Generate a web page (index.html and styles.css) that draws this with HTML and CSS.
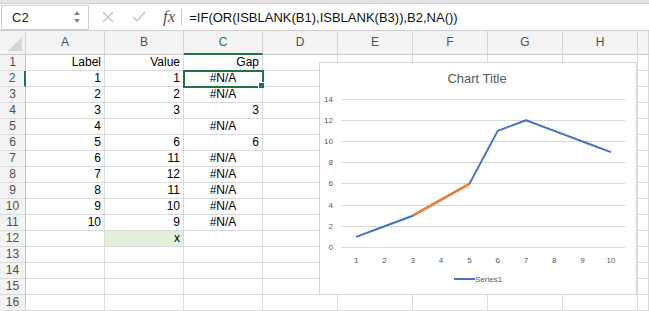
FILE: index.html
```html
<!DOCTYPE html>
<html lang="en">
<head>
    <meta charset="UTF-8">
    <meta name="viewport" content="width=device-width, initial-scale=1.0">
    <title>Gap</title>
    <link rel="stylesheet" href="styles.css">
</head>
<body>
    <div class="toolbar"></div>
    <div class="formula-bar">
        <div class="name-box">
            <span>C2</span>
            <svg class="spin" width="8" height="16" viewBox="0 0 8 16">
                <path d="M1 6 L4 2 L7 6 Z" fill="#8a8a8a"/>
                <path d="M1 10 L4 14 L7 10 Z" fill="#8a8a8a"/>
            </svg>
        </div>
        <div class="fb-icons">
            <svg width="14" height="14" viewBox="0 0 14 14">
                <path d="M2 2 L12 12 M12 2 L2 12" stroke="#c4c4c4" stroke-width="1.4" fill="none"/>
            </svg>
            <svg width="16" height="14" viewBox="0 0 16 14">
                <path d="M2 7 L6 11 L14 2" stroke="#c4c4c4" stroke-width="1.4" fill="none"/>
            </svg>
            <span class="fx">fx</span>
        </div>
        <div class="formula">=IF(OR(ISBLANK(B1),ISBLANK(B3)),B2,NA())</div>
    </div>

    <div class="sheet">
        <div class="row head">
            <div class="corner"></div><div>A</div><div>B</div><div class="sel-col">C</div><div>D</div><div>E</div><div>F</div><div>G</div><div>H</div><div></div>
        </div>
        <div class="row">
            <div class="rn">1</div><div>Label</div><div>Value</div><div>Gap</div><div></div><div></div><div></div><div></div><div></div><div></div>
        </div>
        <div class="row">
            <div class="rn sel-row">2</div><div>1</div><div>1</div><div class="na active">#N/A</div><div></div><div></div><div></div><div></div><div></div><div></div>
        </div>
        <div class="row">
            <div class="rn">3</div><div>2</div><div>2</div><div class="na">#N/A</div><div></div><div></div><div></div><div></div><div></div><div></div>
        </div>
        <div class="row">
            <div class="rn">4</div><div>3</div><div>3</div><div>3</div><div></div><div></div><div></div><div></div><div></div><div></div>
        </div>
        <div class="row">
            <div class="rn">5</div><div>4</div><div></div><div class="na">#N/A</div><div></div><div></div><div></div><div></div><div></div><div></div>
        </div>
        <div class="row">
            <div class="rn">6</div><div>5</div><div>6</div><div>6</div><div></div><div></div><div></div><div></div><div></div><div></div>
        </div>
        <div class="row">
            <div class="rn">7</div><div>6</div><div>11</div><div class="na">#N/A</div><div></div><div></div><div></div><div></div><div></div><div></div>
        </div>
        <div class="row">
            <div class="rn">8</div><div>7</div><div>12</div><div class="na">#N/A</div><div></div><div></div><div></div><div></div><div></div><div></div>
        </div>
        <div class="row">
            <div class="rn">9</div><div>8</div><div>11</div><div class="na">#N/A</div><div></div><div></div><div></div><div></div><div></div><div></div>
        </div>
        <div class="row">
            <div class="rn">10</div><div>9</div><div>10</div><div class="na">#N/A</div><div></div><div></div><div></div><div></div><div></div><div></div>
        </div>
        <div class="row">
            <div class="rn">11</div><div>10</div><div>9</div><div class="na">#N/A</div><div></div><div></div><div></div><div></div><div></div><div></div>
        </div>
        <div class="row">
            <div class="rn">12</div><div></div><div class="marked">x</div><div></div><div></div><div></div><div></div><div></div><div></div><div></div>
        </div>
        <div class="row">
            <div class="rn">13</div><div></div><div></div><div></div><div></div><div></div><div></div><div></div><div></div><div></div>
        </div>
        <div class="row">
            <div class="rn">14</div><div></div><div></div><div></div><div></div><div></div><div></div><div></div><div></div><div></div>
        </div>
        <div class="row">
            <div class="rn">15</div><div></div><div></div><div></div><div></div><div></div><div></div><div></div><div></div><div></div>
        </div>
        <div class="row">
            <div class="rn">16</div><div></div><div></div><div></div><div></div><div></div><div></div><div></div><div></div><div></div>
        </div>

        <!-- floating chart over the cells -->
        <div class="chart">
            <svg width="318" height="233" viewBox="0 0 318 233">
                <text x="158" y="21" class="title" text-anchor="middle">Chart Title</text>
                <g stroke="#d9d9d9" stroke-width="1">
                    <line x1="23" x2="306" y1="37.5" y2="37.5"/>
                    <line x1="23" x2="306" y1="58.5" y2="58.5"/>
                    <line x1="23" x2="306" y1="79.5" y2="79.5"/>
                    <line x1="23" x2="306" y1="100.5" y2="100.5"/>
                    <line x1="23" x2="306" y1="121.5" y2="121.5"/>
                    <line x1="23" x2="306" y1="143.5" y2="143.5"/>
                    <line x1="23" x2="306" y1="164.5" y2="164.5"/>
                    <line x1="23" x2="306" y1="185.5" y2="185.5"/>
                </g>
                <g class="axis" text-anchor="end">
                    <text x="14" y="40">14</text>
                    <text x="14" y="61">12</text>
                    <text x="14" y="82">10</text>
                    <text x="14" y="103">8</text>
                    <text x="14" y="124">6</text>
                    <text x="14" y="146">4</text>
                    <text x="14" y="167">2</text>
                    <text x="14" y="188">0</text>
                </g>
                <g class="axis" text-anchor="middle">
                    <text x="37.2" y="201">1</text>
                    <text x="65.5" y="201">2</text>
                    <text x="93.8" y="201">3</text>
                    <text x="122.1" y="201">4</text>
                    <text x="150.4" y="201">5</text>
                    <text x="178.7" y="201">6</text>
                    <text x="207" y="201">7</text>
                    <text x="235.3" y="201">8</text>
                    <text x="263.6" y="201">9</text>
                    <text x="291.9" y="201">10</text>
                </g>
                <polyline points="37.2,174.9 65.5,164.3 93.8,153.7 150.4,121.9 178.7,68.9 207,58.3 235.3,68.9 263.6,79.5 291.9,90.1"
                          fill="none" stroke="#4472c4" stroke-width="2" stroke-linejoin="round"/>
                <polyline points="93.8,153.7 150.4,121.9" fill="none" stroke="#ed7d31" stroke-width="2.5"/>
                <line x1="135" x2="156" y1="217" y2="217" stroke="#4472c4" stroke-width="2"/>
                <text x="156" y="220" class="axis">Series1</text>
            </svg>
        </div>
    </div>
</body>
</html>
```

FILE: styles.css
```css
body {
    margin: 0;
    font-family: "Liberation Sans", Arial, sans-serif;
    background-color: #ffffff;
    color: #000000;
    width: 649px;
    height: 311px;
    overflow: hidden;
}
.toolbar {
    height: 3px;
    background-color: #e4e4e4;
    border-bottom: 1px solid #cfcfcf;
}
.formula-bar {
    height: 26px;
    display: flex;
    align-items: center;
    border-bottom: 1px solid #cfcfcf;
    background-color: #ffffff;
}
.name-box {
    box-sizing: border-box;
    width: 88px;
    height: 25px;
    margin-left: 1px;
    border: 1px solid #cfcfcf;
    display: flex;
    align-items: center;
    justify-content: space-between;
    padding: 0 7px 0 10px;
    font-size: 13px;
    color: #222222;
}
.fb-icons {
    display: flex;
    align-items: center;
    gap: 16px;
    padding-left: 12px;
    height: 100%;
}
.fx {
    font-family: "Liberation Serif", serif;
    font-style: italic;
    font-size: 17px;
    color: #555555;
    padding-right: 6px;
    border-right: 1px solid #cccccc;
    line-height: 16px;
}
.formula {
    padding-left: 7px;
    font-size: 13px;
    color: #111111;
}
.sheet {
    position: relative;
}
.row {
    display: grid;
    grid-template-columns: 26px 79px 79px 79px repeat(5, 75px) 1fr;
    height: 16px;
}
.row > div {
    box-sizing: border-box;
    border-right: 1px solid #dadada;
    border-bottom: 1px solid #dadada;
    font-size: 12px;
    line-height: 15px;
    padding: 0 3px;
    text-align: right;
    white-space: nowrap;
}
.row.head {
    height: 24px;
}
.row.head > div {
    background-color: #f3f3f3;
    border-right-color: #d4d4d4;
    border-bottom-color: #c8c8c8;
    text-align: center;
    line-height: 23px;
    color: #505050;
}
.corner {
    position: relative;
}
.corner::after {
    content: "";
    position: absolute;
    right: 3px;
    bottom: 3px;
    border-style: solid;
    border-width: 0 0 14px 14px;
    border-color: transparent transparent #d6d6d6 transparent;
}
.row.head > .sel-col {
    color: #217346;
    border-bottom: 2px solid #217346;
    line-height: 22px;
}
.row > .rn {
    background-color: #f3f3f3;
    border-right-color: #c8c8c8;
    text-align: center;
    color: #505050;
    padding: 0;
}
.row > .sel-row {
    color: #217346;
    border-right: 2px solid #217346;
}
.row > .na {
    text-align: center;
}
.row > .marked {
    background-color: #e2efda;
}
.active {
    position: relative;
    outline: 2px solid #217346;
    outline-offset: -1px;
}
.active::after {
    content: "";
    position: absolute;
    right: -3px;
    bottom: -3px;
    width: 5px;
    height: 5px;
    background-color: #217346;
    border: 1px solid #ffffff;
}
.chart {
    position: absolute;
    left: 319px;
    top: 31px;
    width: 318px;
    height: 233px;
    box-sizing: border-box;
    border: 1px solid #d4d4d4;
    background-color: #ffffff;
}
.chart svg {
    display: block;
    margin: -1px;
}
.title {
    font-family: "Liberation Sans", Arial, sans-serif;
    font-size: 13px;
    fill: #595959;
}
.axis {
    font-family: "Liberation Sans", Arial, sans-serif;
    font-size: 8px;
    fill: #595959;
}
```
